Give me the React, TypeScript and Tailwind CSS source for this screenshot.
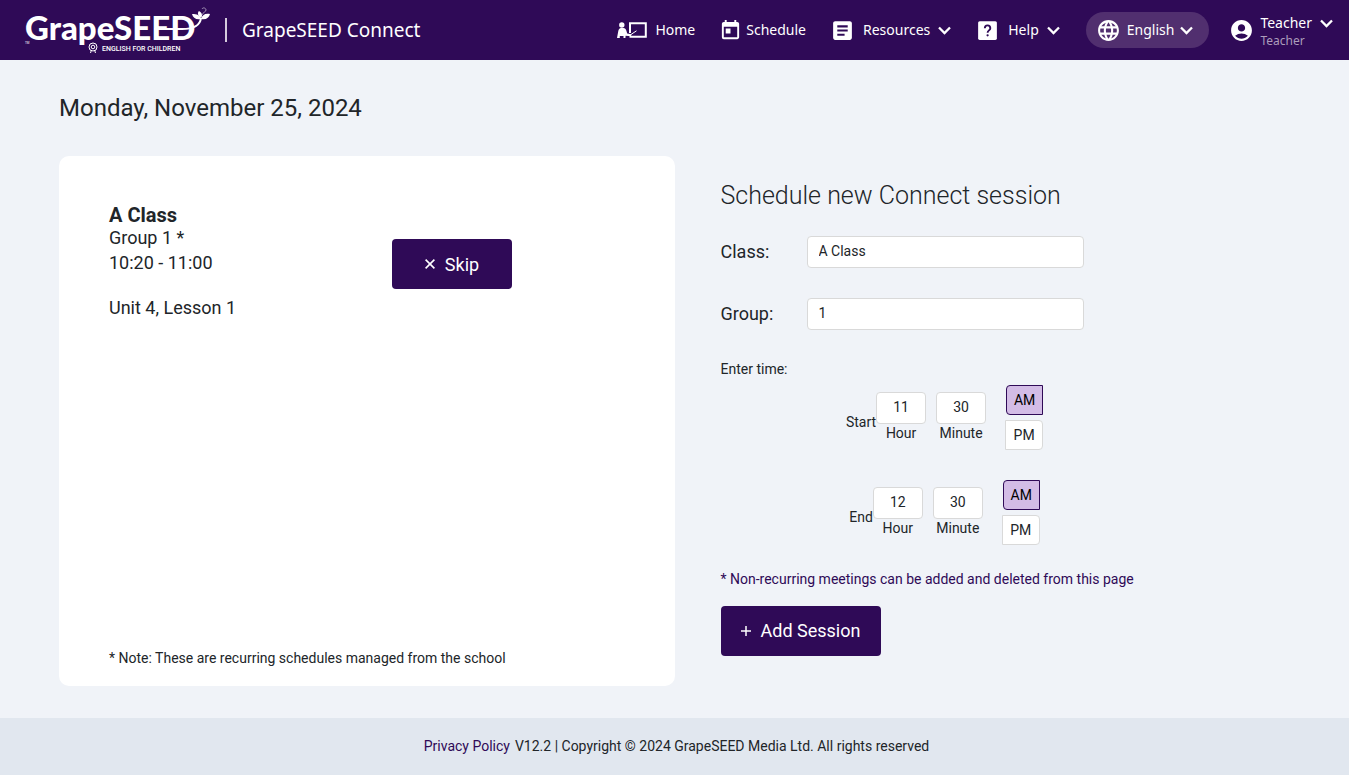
import { ReactNode, useState } from "react";
import { MdAccountCircle, MdArticle, MdLanguage, MdToday } from "react-icons/md";

type Period = "AM" | "PM";

const Logo = () => (
    <svg
        width="190"
        height="52"
        viewBox="0 0 190 52"
        fill="#ffffff"
        role="img"
        aria-label="GrapeSEED English for Children"
    >
        <text
            x="1"
            y="36"
            fontFamily="Lato, sans-serif"
            fontWeight="900"
            fontSize="33"
        >
            GrapeSEED
        </text>
        <text x="1" y="40" fontFamily="Roboto, sans-serif" fontSize="3">
            TM
        </text>
        {/* Vine and leaves */}
        <path
            d="M130 25h28c10 0 18-2 19-11"
            fill="none"
            stroke="#ffffff"
            strokeWidth="2"
        />
        <path d="M177 15c-5 1-8-1-9-5 5 0 8 1 9 5z" />
        <path d="M177 14c-3-2-4-5-2-7 3 2 4 4 2 7z" />
        <path d="M177 15c1-4 4-6 9-5-1 4-4 6-9 5z" />
        <path
            d="M178 11c1-3 4-3 4-5s-3-3-4-1"
            fill="none"
            stroke="#a594b6"
            strokeWidth="1"
        />
        {/* Badge */}
        <g fill="none" stroke="#ffffff" strokeWidth="1">
            <circle cx="69" cy="43" r="4" />
            <circle cx="69" cy="43" r="1.800" />
            <path d="M67.500 46l-1 3M70.500 46l1 3" />
        </g>
        <text
            x="78"
            y="47"
            fontFamily="Roboto, sans-serif"
            fontWeight="500"
            fontSize="7"
        >
            ENGLISH FOR CHILDREN
        </text>
    </svg>
);

const Chevron = () => (
    <svg width="13" height="9" viewBox="0 0 13 9" fill="none" aria-hidden="true">
        <path d="M1 1.5l5.5 5.5L12 1.5" stroke="currentColor" strokeWidth="2.3" />
    </svg>
);

const HomeIcon = () => (
    <svg width="34" height="18" viewBox="0 0 34 18" fill="currentColor" aria-hidden="true">
        <circle cx="4.800" cy="4" r="2.700" />
        <path d="M0 17l1.200-6.500C1.600 8.500 2.500 7 4 7h2.500c1.500 0 2.300 1 2.800 2.500l.9 3 4.300.8-.5 2-5.400-.6-.2 2.300H6.500v-2H2.800v2z" />
        <path
            d="M13 12V2.200h15.800v13.600H12.500"
            fill="none"
            stroke="currentColor"
            strokeWidth="2"
        />
        <path d="M13.500 13.800l6-4" stroke="currentColor" strokeWidth="1" />
    </svg>
);

const HelpIcon = () => (
    <svg width="25" height="25" viewBox="0 0 24 24" aria-hidden="true">
        <rect x="3" y="3" width="18" height="18" rx="1.500" fill="#ffffff" />
        <path
            d="M9.400 9.800c0-3.700 5.300-3.700 5.300 0 0 2-2.600 2.200-2.600 4.300"
            fill="none"
            stroke="#2f0a57"
            strokeWidth="1.800"
        />
        <circle cx="12.100" cy="16.600" r="1.100" fill="#2f0a57" />
    </svg>
);

const CloseIcon = () => (
    <svg width="10" height="10" viewBox="0 0 10 10" aria-hidden="true">
        <path d="M.6.6l8.800 8.800M9.400.6L.6 9.400" stroke="#ffffff" strokeWidth="1.600" />
    </svg>
);

const PlusIcon = () => (
    <svg width="10" height="10" viewBox="0 0 10 10" aria-hidden="true">
        <path d="M5 0v10M0 5h10" stroke="#ffffff" strokeWidth="1.500" />
    </svg>
);

const NavLink = ({ icon, children }: { icon: ReactNode; children: ReactNode }) => (
    <a href="#" className="flex items-center gap-1">
        {icon}
        <span>{children}</span>
    </a>
);

const NavMenu = ({ icon, children }: { icon: ReactNode; children: ReactNode }) => (
    <button type="button" className="flex items-center gap-2">
        {icon}
        <span>{children}</span>
        <Chevron />
    </button>
);

const Header = () => (
    <header className="min-h-15 pl-6 pr-4 bg-[#2f0a57] text-white flex items-center justify-between font-['Noto_Sans',sans-serif]">
        <div className="flex items-center">
            <Logo />
            <span className="ml-[11px] h-6 w-0.5 bg-[#d5cbdd]" />
            <span className="ml-[15px] text-[19px] leading-6">GrapeSEED Connect</span>
        </div>
        <nav className="flex items-center text-sm">
            <div className="mr-6.5 flex items-center gap-6">
                <NavLink icon={<HomeIcon />}>Home</NavLink>
                <NavLink icon={<MdToday size={23} />}>Schedule</NavLink>
                <NavMenu icon={<MdArticle size={25} />}>Resources</NavMenu>
                <NavMenu icon={<HelpIcon />}>Help</NavMenu>
            </div>
            <button
                type="button"
                className="mr-5 h-9 pl-2.5 pr-4 rounded-full bg-[#512f6f] flex items-center gap-1.5"
            >
                <MdLanguage size={25} />
                English
                <Chevron />
            </button>
            <button type="button" className="flex items-center gap-1.5 text-left">
                <MdAccountCircle size={25} />
                <span className="pt-0.5 flex flex-col">
                    <span className="flex items-center gap-2 leading-5">
                        Teacher
                        <Chevron />
                    </span>
                    <span className="text-xs leading-4 text-[#ac9dbb]">Teacher</span>
                </span>
            </button>
        </nav>
    </header>
);

const SessionCard = () => (
    <section className="min-h-[530px] pt-[50px] px-[50px] pb-[17px] bg-white rounded-[10px] flex flex-col justify-between">
        <div className="grid grid-cols-[283px_auto] justify-start items-start text-lg leading-[25px]">
            <div>
                <h2 className="text-xl leading-[19px] font-bold">A Class</h2>
                <p>Group 1 *</p>
                <p>10:20 - 11:00</p>
                <p className="mt-5">Unit 4, Lesson 1</p>
            </div>
            <button
                type="button"
                className="mt-[33px] w-[120px] h-[50px] rounded bg-[#2f0a57] text-white flex items-center justify-center gap-2.5"
            >
                <CloseIcon />
                Skip
            </button>
        </div>
        <p>* Note: These are recurring schedules managed from the school</p>
    </section>
);

const SelectField = ({
    id,
    label,
    value,
}: {
    id: string;
    label: string;
    value: string;
}) => (
    <div className="flex items-center">
        <label htmlFor={id} className="w-[86px] text-lg">
            {label}
        </label>
        <select
            id={id}
            defaultValue={value}
            className="w-[277px] h-8 px-[11px] pb-0.5 appearance-none rounded border border-[#d9d9d9] bg-white"
        >
            <option>{value}</option>
        </select>
    </div>
);

const TimeInput = ({ label, value }: { label: string; value: string }) => (
    <label className="flex flex-col items-center leading-[18px]">
        <input
            defaultValue={value}
            className="w-[50px] h-8 pb-0.5 rounded border border-[#d9d9d9] bg-white text-center"
        />
        {label}
    </label>
);

const TimeRow = ({
    label,
    hour,
    minute,
}: {
    label: string;
    hour: string;
    minute: string;
}) => {
    const [period, setPeriod] = useState<Period>("AM");

    return (
        <fieldset className="ml-[86px] w-[276px] flex items-start justify-center">
            <span className="pt-[26px]">{label}</span>
            <div className="pt-[7px] flex gap-2.5">
                <TimeInput label="Hour" value={hour} />
                <TimeInput label="Minute" value={minute} />
            </div>
            <div className="ml-[19px] flex flex-col items-end gap-[5px]">
                <label className="relative w-[37px] h-[30px] rounded-l border border-[#d9d9d9] bg-white flex items-center justify-center has-checked:border-[#2f0a57] has-checked:bg-[#d3bce6] has-checked:text-black">
                    <input
                        type="radio"
                        name={label}
                        className="sr-only"
                        checked={period === "AM"}
                        onChange={() => setPeriod("AM")}
                    />
                    AM
                </label>
                <label className="relative w-[38px] h-[30px] rounded-r border border-[#d9d9d9] bg-white flex items-center justify-center has-checked:border-[#2f0a57] has-checked:bg-[#d3bce6] has-checked:text-black">
                    <input
                        type="radio"
                        name={label}
                        className="sr-only"
                        checked={period === "PM"}
                        onChange={() => setPeriod("PM")}
                    />
                    PM
                </label>
            </div>
        </fieldset>
    );
};

const ScheduleForm = () => (
    <form className="pl-[46px] pt-6">
        <h2 className="mb-6 text-[25px] leading-8 font-light">
            Schedule new Connect session
        </h2>
        <div className="flex flex-col gap-[30px]">
            <SelectField id="class" label="Class:" value="A Class" />
            <SelectField id="group" label="Group:" value="1" />
        </div>
        <p className="mt-7 mb-[5px]">Enter time:</p>
        <div className="flex flex-col gap-[30px]">
            <TimeRow label="Start" hour="11" minute="30" />
            <TimeRow label="End" hour="12" minute="30" />
        </div>
        <p className="mt-[23px] mb-4 text-[#2f0a57]">
            * Non-recurring meetings can be added and deleted from this page
        </p>
        <button
            type="button"
            className="w-[160px] h-[50px] rounded bg-[#2f0a57] text-white text-lg flex items-center justify-center gap-2.5"
        >
            <PlusIcon />
            Add Session
        </button>
    </form>
);

const App = () => {
    return (
        <div className="min-h-screen flex flex-col bg-[#f0f3f8] text-[#212529] text-sm leading-[22px] font-[Roboto,sans-serif]">
            <Header />
            <main className="flex-1 px-[59px] pt-8 pb-8">
                <h1 className="mb-8 text-2xl">Monday, November 25, 2024</h1>
                <div className="grid grid-cols-2">
                    <SessionCard />
                    <ScheduleForm />
                </div>
            </main>
            <footer className="min-h-[57px] pl-1 pb-0.5 bg-[#e1e7ef] flex items-center justify-center gap-[5px]">
                <a href="#" className="text-[#2f0a57]">
                    Privacy Policy
                </a>
                <span>
                    V12.2 | Copyright © 2024 GrapeSEED Media Ltd. All rights reserved
                </span>
            </footer>
        </div>
    );
};

export default App;
